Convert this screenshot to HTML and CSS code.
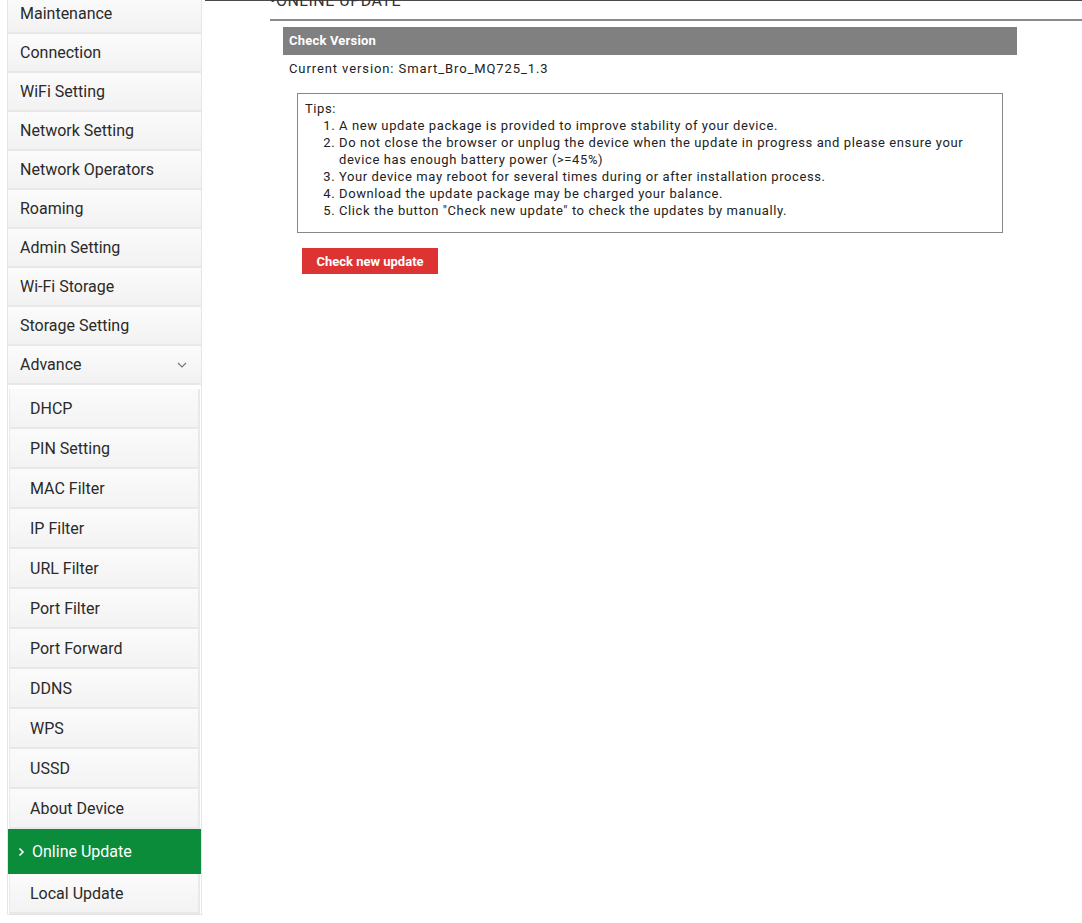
FILE: index.html
```html
<!DOCTYPE html>
<html lang="en">
<head>
  <meta charset="UTF-8" />
  <meta name="viewport" content="width=device-width, initial-scale=1" />
  <title>Online Update</title>
  <link rel="stylesheet" href="styles.css">
</head>
<body>

  <div class="page">
    <ul class="menu">
      <li class="menu-item">Maintenance</li>
      <li class="menu-item">Connection</li>
      <li class="menu-item">WiFi Setting</li>
      <li class="menu-item">Network Setting</li>
      <li class="menu-item">Network Operators</li>
      <li class="menu-item">Roaming</li>
      <li class="menu-item">Admin Setting</li>
      <li class="menu-item">Wi-Fi Storage</li>
      <li class="menu-item">Storage Setting</li>
      <li class="menu-item has-sub">Advance
        <svg class="caret" width="10" height="6" viewBox="0 0 10 6"><path d="M1 1l4 4 4-4" fill="none" stroke="#777" stroke-width="1.2"/></svg>
      </li>
      <li>
        <ul class="submenu">
          <li class="sub-item">DHCP</li>
          <li class="sub-item">PIN Setting</li>
          <li class="sub-item">MAC Filter</li>
          <li class="sub-item">IP Filter</li>
          <li class="sub-item">URL Filter</li>
          <li class="sub-item">Port Filter</li>
          <li class="sub-item">Port Forward</li>
          <li class="sub-item">DDNS</li>
          <li class="sub-item">WPS</li>
          <li class="sub-item">USSD</li>
          <li class="sub-item">About Device</li>
          <li class="sub-item active">
            <svg class="arrow" width="7" height="10" viewBox="0 0 7 10"><path d="M1.5 1.5l3.5 3.5-3.5 3.5" fill="none" stroke="#fff" stroke-width="1.6"/></svg>
            Online Update
          </li>
          <li class="sub-item">Local Update</li>
        </ul>
      </li>
    </ul>

    <div class="main">
      <h2 class="title">&bull;ONLINE UPDATE</h2>

      <div class="section">
        <div class="section-head">Check Version</div>
        <p class="version">Current version: Smart_Bro_MQ725_1.3</p>

        <div class="tips">
          <p>Tips:</p>
          <ol>
            <li>A new update package is provided to improve stability of your device.</li>
            <li>Do not close the browser or unplug the device when the update in progress and please ensure your device has enough battery power (&gt;=45%)</li>
            <li>Your device may reboot for several times during or after installation process.</li>
            <li>Download the update package may be charged your balance.</li>
            <li>Click the button "Check new update" to check the updates by manually.</li>
          </ol>
        </div>

        <button type="button" class="btn">Check new update</button>
      </div>
    </div>
  </div>

</body>
</html>
```
FILE: styles.css
```css
body {
  margin: 0;
  font-family: Roboto, "Liberation Sans", sans-serif;
  color: #222;
  background: #fff;
  overflow: hidden;
}
.page {
  display: flex;
  align-items: flex-start;
}
ul {
  list-style: none;
  margin: 0;
  padding: 0;
}

/* side menu */
.menu {
  width: 193px;
  margin-top: -5px;
  margin-left: 7px;
  border: 1px solid #e6e6e6;
  border-top: none;
  flex-shrink: 0;
}
.menu-item {
  display: flex;
  align-items: center;
  justify-content: space-between;
  height: 37px;
  padding: 0 12px 0 12px;
  font-size: 16px;
  color: #2a2a2a;
  background: linear-gradient(#fbfbfb, #f2f2f2);
  border-bottom: 2px solid #e8e8e8;
}
.caret {
  margin-right: 2px;
}
.submenu {
  margin: 4px 1px 0 1px;
  border-left: 1px solid #e9e9e9;
  border-right: 2px solid #e9e9e9;
}
.sub-item {
  display: flex;
  align-items: center;
  height: 38px;
  padding-left: 20px;
  font-size: 16px;
  color: #2a2a2a;
  background: linear-gradient(#fbfbfb, #f3f3f3);
  border-bottom: 2px solid #e8e8e8;
}
.sub-item.active {
  height: 45px;
  margin: 0 -3px 0 -2px;
  padding-left: 10px;
  gap: 7px;
  background: #0a8c3b;
  color: #fff;
  font-size: 16px;
  border-bottom: none;
}

/* main content */
.main {
  flex: 1;
  margin-left: 3px;
  border-top: 1px solid #4a4a4a;
}
.title {
  margin: -8px 0 0 65px;
  padding-bottom: 10px;
  font-size: 16px;
  line-height: 16px;
  font-weight: normal;
  letter-spacing: 0.5px;
  color: #333;
  border-bottom: 2px solid #8c8c8c;
}
.section {
  width: 734px;
  margin: 6px 0 0 78px;
  font-size: 13px;
  letter-spacing: 0.6px;
}
.section-head {
  height: 28px;
  line-height: 28px;
  padding-left: 6px;
  background: #808080;
  color: #fff;
  font-weight: bold;
  letter-spacing: 0.2px;
}
.version {
  margin: 5px 0 0;
  padding-left: 6px;
  line-height: 17px;
  letter-spacing: 0.9px;
}
.tips {
  width: 690px;
  margin: 16px 0 0 14px;
  padding: 6px 7px 13px;
  border: 1px solid #888;
  line-height: 17px;
}
.tips p {
  margin: 0;
}
.tips ol {
  margin: 0;
  padding-left: 34px;
}
.btn {
  display: block;
  width: 136px;
  height: 26px;
  margin: 15px 0 0 19px;
  padding: 0;
  border: none;
  background: #dd3333;
  color: #fff;
  font-family: Roboto, "Liberation Sans", sans-serif;
  font-size: 13px;
  font-weight: bold;
  cursor: pointer;
}
```
